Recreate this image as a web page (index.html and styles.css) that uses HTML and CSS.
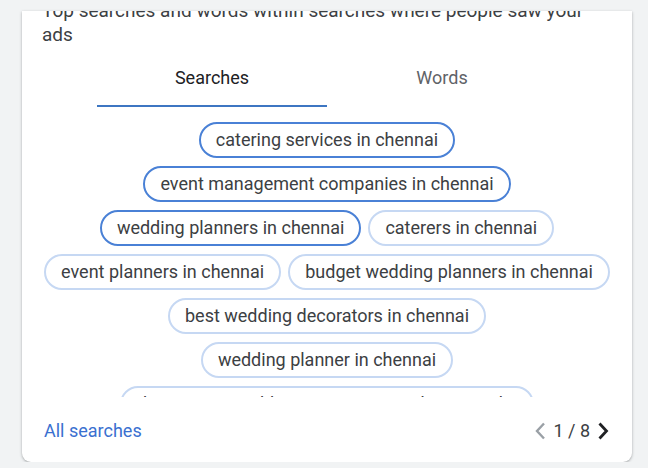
FILE: index.html
```html
<!DOCTYPE html>
<html>
<head>
<meta charset="utf-8">
<link rel="stylesheet" href="styles.css">
</head>
<body>
<div class="page">
  <div class="card">
    <p class="heading">Top searches and words within searches where people saw your ads</p>
    <div class="tabs">
      <div class="tab active">Searches</div>
      <div class="tab">Words</div>
    </div>
    <div class="chips">
      <div class="row"><span class="chip sel">catering services in chennai</span></div>
      <div class="row"><span class="chip sel">event management companies in chennai</span></div>
      <div class="row"><span class="chip sel">wedding planners in chennai</span><span class="chip">caterers in chennai</span></div>
      <div class="row"><span class="chip">event planners in chennai</span><span class="chip">budget wedding planners in chennai</span></div>
      <div class="row"><span class="chip">best wedding decorators in chennai</span></div>
      <div class="row"><span class="chip">wedding planner in chennai</span></div>
      <div class="row"><span class="chip">destination wedding organisers in chennai india</span></div>
    </div>
    <div class="footer">
      <a class="link">All searches</a>
      <div class="pager">
        <svg class="chev" width="14" height="20" viewBox="0 0 14 20"><path d="M11 2.5 L4 10 L11 17.5" fill="none" stroke="#9aa0a6" stroke-width="2.4"/></svg>
        <span class="count">1 / 8</span>
        <svg class="chev" width="14" height="20" viewBox="0 0 14 20"><path d="M3.5 2.5 L10.5 10 L3.5 17.5" fill="none" stroke="#202124" stroke-width="2.8"/></svg>
      </div>
    </div>
  </div>
</div>
</body>
</html>
```
FILE: styles.css
```css
html, body {
  margin: 0;
  padding: 0;
  background: #f1f3f4;
  font-family: Roboto, "Noto Sans", "Liberation Sans", sans-serif;
}
.page {
  padding: 11px 0 0 22px;
}
.card {
  width: 610px;
  height: 451px;
  background: #fff;
  border-radius: 0 0 9px 9px;
  box-shadow: 0 1px 3px rgba(60, 64, 67, 0.3), 0 1px 2px rgba(60, 64, 67, 0.15);
  overflow: hidden;
  display: flex;
  flex-direction: column;
}
.heading {
  flex: none;
  margin: -12px 0 0 20px;
  width: 550px;
  font-size: 19px;
  line-height: 24px;
  color: #3c4043;
}
.tabs {
  flex: none;
  display: flex;
  justify-content: center;
}
.tab {
  width: 230px;
  height: 60px;
  box-sizing: border-box;
  display: flex;
  align-items: center;
  justify-content: center;
  padding-top: 2px;
  font-size: 18px;
  color: #5f6368;
  border-bottom: 2px solid transparent;
}
.tab.active {
  color: #202124;
  border-bottom-color: #3d76c2;
}
.chips {
  flex: 1;
  min-height: 0;
  overflow: hidden;
  padding-top: 15px;
  display: flex;
  flex-direction: column;
  gap: 8px;
}
.row {
  flex: none;
  display: flex;
  justify-content: center;
  gap: 7px;
}
.chip {
  flex: none;
  height: 36px;
  box-sizing: border-box;
  border: 2px solid #c6d8f3;
  border-radius: 18px;
  padding: 0 15px;
  font-size: 18px;
  line-height: 32px;
  color: #3c4043;
  white-space: nowrap;
}
.chip.sel {
  border-color: #4a81d6;
}
.footer {
  height: 65px;
  flex: none;
  display: flex;
  align-items: center;
  justify-content: space-between;
  padding: 0 22px 0 22px;
}
.link {
  font-size: 18px;
  color: #3a70d0;
  padding-top: 2px;
}
.pager {
  display: flex;
  align-items: center;
  gap: 6px;
  padding-top: 2px;
}
.count {
  font-size: 18px;
  color: #3c4043;
}
.chev {
  display: block;
}
```
